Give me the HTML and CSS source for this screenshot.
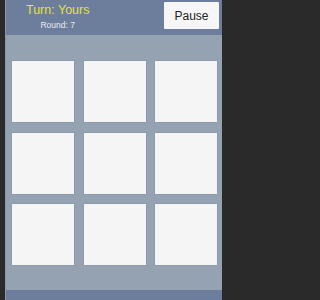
FILE: index.html
```html
<!DOCTYPE html>
<html>
<head>
<meta charset="utf-8">
<link rel="stylesheet" href="styles.css">
</head>
<body>
<div class="frame">
  <header class="top">
    <div class="status">
      <div class="turn">Turn: Yours</div>
      <div class="round">Round: 7</div>
    </div>
    <button class="pause">Pause</button>
  </header>
  <main class="board">
    <div class="grid">
      <div class="tile"></div><div class="tile"></div><div class="tile"></div>
      <div class="tile"></div><div class="tile"></div><div class="tile"></div>
      <div class="tile"></div><div class="tile"></div><div class="tile"></div>
    </div>
  </main>
  <footer class="bottom"></footer>
</div>
</body>
</html>
```

FILE: styles.css
```css
html, body {
  margin: 0;
  padding: 0;
  background: #2a2a2a;
  font-family: "Liberation Sans", Arial, sans-serif;
}
.frame {
  margin: 0 0 0 5px;
  width: 216px;
  height: 300px;
  display: flex;
  flex-direction: column;
  background: #95a2b2;
  border-left: 1px solid #8a96a6;
}
.top {
  height: 35px;
  flex: none;
  background: #6d7e9c;
  display: flex;
  align-items: flex-start;
}
.status {
  margin-left: 20px;
  padding-top: 3px;
  display: flex;
  flex-direction: column;
  align-items: center;
}
.turn {
  color: #e2e23a;
  font-size: 12.5px;
  line-height: 14px;
}
.round {
  color: #e9ebf2;
  font-size: 8.5px;
  line-height: 10px;
  margin-top: 3px;
}
.pause {
  margin: 2px 3px 0 auto;
  width: 55px;
  height: 27px;
  background: #f6f6f6;
  border: none;
  border-radius: 1px;
  padding: 0;
  font-family: "Liberation Sans", Arial, sans-serif;
  font-size: 12px;
  color: #222;
}
.board {
  flex: 1;
  padding: 26px 0 0 6px;
}
.grid {
  display: grid;
  grid-template-columns: repeat(3, 62px);
  grid-auto-rows: 61px;
  column-gap: 9.5px;
  row-gap: 10.5px;
}
.tile {
  background: #f5f5f5;
  box-shadow: 0 0 1px rgba(60, 70, 90, 0.5);
}
.bottom {
  height: 10px;
  flex: none;
  background: #6d7e9c;
}
```
